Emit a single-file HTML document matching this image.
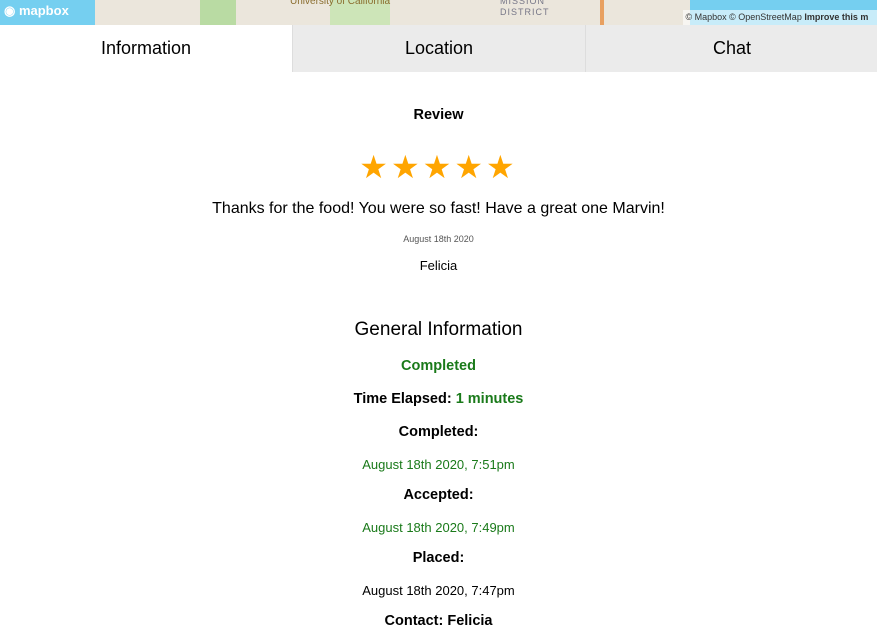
<!DOCTYPE html>
<html><head><meta charset="utf-8"><style>
body{margin:0;width:877px;height:635px;overflow:hidden;background:#fff;font-family:"Liberation Sans",Arial,sans-serif;color:#000;position:relative}
.map{position:absolute;left:0;top:0;width:877px;height:25px;background:#ebe6dc;overflow:hidden}
.t{position:absolute;left:0;width:877px;text-align:center}
.g{color:#1a7a1a}
.b{font-size:14.5px;font-weight:bold}
.tab{position:absolute;top:25px;height:47px;line-height:47px;text-align:center;font-size:18px}
</style></head><body>
<div class="map">
  <div style="position:absolute;left:0;top:0;width:95px;height:25px;background:#75cff0"></div>
  <div style="position:absolute;left:690px;top:0;width:187px;height:25px;background:#75cff0"></div>
  <div style="position:absolute;left:200px;top:0;width:36px;height:25px;background:#b9dba3"></div>
  <div style="position:absolute;left:330px;top:0;width:60px;height:25px;background:#cde5b8"></div>
  <div style="position:absolute;left:600px;top:0;width:4px;height:25px;background:#e8a060"></div>
  <div style="position:absolute;left:4px;top:3px;font:bold 13px 'Liberation Sans';color:#fff">&#9673; mapbox</div>
  <div style="position:absolute;left:290px;top:-4px;font-size:10px;color:#8a6d2e">University of California</div>
  <div style="position:absolute;left:500px;top:-4px;font-size:9px;color:#778;letter-spacing:1px;line-height:11px">MISSION<br>DISTRICT</div>
  <div style="position:absolute;left:683px;top:10px;height:15px;width:194px;background:rgba(255,255,255,.6);font-size:9px;line-height:15px;color:#333;white-space:nowrap">&nbsp;© Mapbox © OpenStreetMap <b>Improve this m</b></div>
</div>
<div class="tab" style="left:0;width:292px;background:#fff">Information</div>
<div class="tab" style="left:292px;width:292px;background:#ebebeb;border-left:1px solid #ddd">Location</div>
<div class="tab" style="left:585px;width:292px;background:#ebebeb;border-left:1px solid #ddd">Chat</div>
<div class="t b" style="top:107px">Review</div>
<div class="t" style="top:150px;font-size:32px;color:#ffa500;letter-spacing:3px;line-height:34px">★★★★★</div>
<div class="t" style="top:200px;font-size:16px">Thanks for the food! You were so fast! Have a great one Marvin!</div>
<div class="t" style="top:234px;font-size:9px;color:#555">August 18th 2020</div>
<div class="t" style="top:258px;font-size:13px">Felicia</div>
<div class="t" style="top:319px;font-size:19px">General Information</div>
<div class="t g b" style="top:358px">Completed</div>
<div class="t b" style="top:391px">Time Elapsed: <span class="g">1 minutes</span></div>
<div class="t b" style="top:424px">Completed:</div>
<div class="t g" style="top:457px;font-size:13px">August 18th 2020, 7:51pm</div>
<div class="t b" style="top:487px">Accepted:</div>
<div class="t g" style="top:520px;font-size:13px">August 18th 2020, 7:49pm</div>
<div class="t b" style="top:550px">Placed:</div>
<div class="t" style="top:583px;font-size:13px">August 18th 2020, 7:47pm</div>
<div class="t b" style="top:613px">Contact: Felicia</div>
</body></html>
